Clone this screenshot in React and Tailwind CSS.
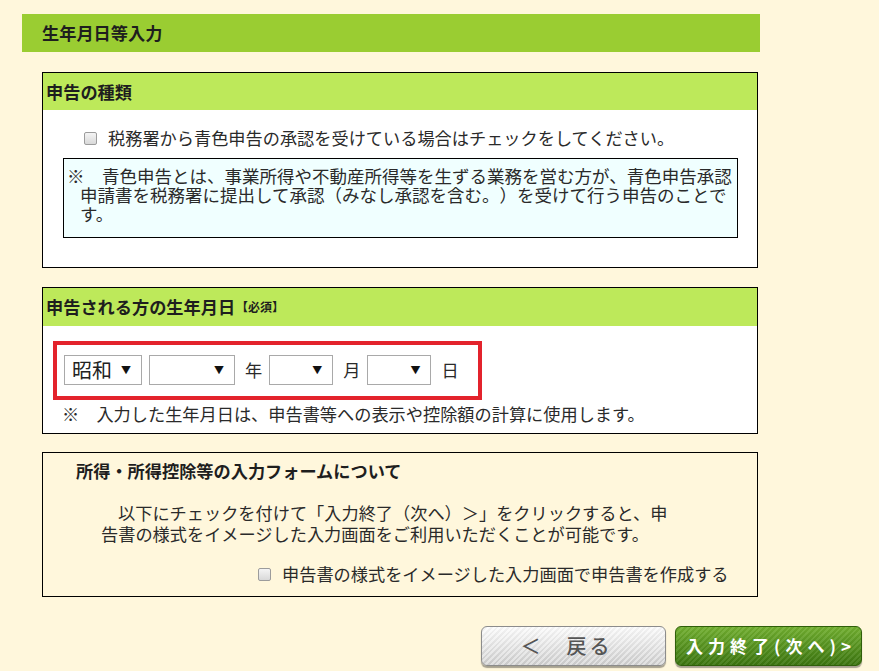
const CheckBox = () => (
  <span className="inline-block w-[13px] h-[13px] rounded-[2px] border border-[#9c9c9c] bg-[linear-gradient(#f4f4f4,#d9d9d9)] shrink-0" />
);

const FakeSelect = ({ width, value }) => (
  <div className={`${width} h-[30px] border border-[#a9a9a9] bg-white flex items-center justify-between pl-[7px] pr-[10px]`}>
    <span className="text-[20px] leading-[28px] text-[#222]">{value}</span>
    <span className="text-[10px] leading-none text-[#111]">▼</span>
  </div>
);

const SectionHead = ({ children }) => (
  <div className="h-[37px] bg-[#bde95a] flex items-center pl-[3px] font-bold text-[#1e1e1e]">{children}</div>
);

export default function App() {
  return (
    <div className="min-h-screen w-full bg-[#fff7dc] pt-[14px] pl-[22px] pb-[4px] text-[17.2px] leading-[20px] text-[#2a2a2a] [text-spacing-trim:space-all] font-['Noto_Sans_CJK_JP',sans-serif]">
      <div className="w-[738px] h-[38px] bg-[#9acd32] flex items-center pl-[20px] font-bold text-[#1e1e1e]">
        生年月日等入力
      </div>

      <div className="ml-[20px] w-[716px]">
        {/* 申告の種類 */}
        <div className="mt-[20px] border border-black bg-white">
          <SectionHead>申告の種類</SectionHead>
          <div className="pt-[18px] pb-[29px]">
            <div className="flex items-center h-[20px] pl-[41px] gap-[11px]">
              <CheckBox />
              <span>税務署から青色申告の承認を受けている場合はチェックをしてください。</span>
            </div>
            <div className="mt-[10px] ml-[20px] mr-[19px] border border-black bg-[#f0ffff] pt-[7px] pb-[14px] pl-[16px] pr-[4px] text-[17.5px] leading-[19px] indent-[-13px]">
              ※　青色申告とは、事業所得や不動産所得等を生ずる業務を営む方が、青色申告承認申請書を税務署に提出して承認（みなし承認を含む。）を受けて行う申告のことです。
            </div>
          </div>
        </div>

        {/* 生年月日 */}
        <div className="mt-[19px] border border-black bg-white">
          <div className="h-[38px] bg-[#bde95a] flex items-center pl-[3px] font-bold text-[#1e1e1e]">
            申告される方の生年月日
            <span className="text-[12px] ml-[1px]">【必須】</span>
          </div>
          <div className="pt-[15px] pb-[9px]">
            <div className="ml-[10px] w-[429px] h-[59px] border-[4px] border-[#e3232c] flex items-center pl-[7px] pb-[2px]">
              <FakeSelect width="w-[78px]" value="昭和" />
              <FakeSelect width="w-[86px] ml-[7px]" value="" />
              <span className="ml-[10px]">年</span>
              <FakeSelect width="w-[64px] ml-[7px]" value="" />
              <span className="ml-[10px]">月</span>
              <FakeSelect width="w-[64px] ml-[7px]" value="" />
              <span className="ml-[10px]">日</span>
            </div>
            <div className="mt-[4px] pl-[19px]">※　入力した生年月日は、申告書等への表示や控除額の計算に使用します。</div>
          </div>
        </div>

        {/* 入力フォームについて */}
        <div className="mt-[18px] border border-black pt-[8px] pb-[12px]">
          <div className="pl-[33px] font-bold text-[#1e1e1e]">所得・所得控除等の入力フォームについて</div>
          <p className="mt-[21px] ml-[58px] w-[568px] leading-[21px] indent-[17px]">
            以下にチェックを付けて「入力終了（次へ）＞」をクリックすると、申告書の様式をイメージした入力画面をご利用いただくことが可能です。
          </p>
          <div className="mt-[20px] flex items-center h-[20px] pl-[215px] gap-[11px]">
            <CheckBox />
            <span>申告書の様式をイメージした入力画面で申告書を作成する</span>
          </div>
        </div>
      </div>

      <div className="w-[840px] mt-[29px] flex justify-end gap-[9px]">
        <button className="w-[185px] h-[40px] rounded-[6px] border border-[#8c8c8c] shadow-[0_2px_1px_rgba(0,0,0,0.35)] bg-[image:repeating-linear-gradient(135deg,rgba(255,255,255,0.35)_0px_2px,rgba(0,0,0,0.03)_2px_4px),linear-gradient(#fbfbfb,#cfcfcf)] flex items-center justify-center text-[20px] text-[#555] font-medium tracking-[3px] pr-[14px]">
          ＜　戻る
        </button>
        <button className="w-[187px] h-[40px] rounded-[6px] border border-[#2f5f0a] shadow-[0_2px_1px_rgba(0,0,0,0.35)] bg-[image:repeating-linear-gradient(135deg,rgba(255,255,255,0.08)_0px_2px,rgba(0,0,0,0.04)_2px_4px),linear-gradient(#72b030,#3c7610)] flex items-center justify-center text-[17px] text-white font-bold tracking-[5px] pl-[5px]">
          入力終了(次へ)&gt;
        </button>
      </div>
    </div>
  );
}
